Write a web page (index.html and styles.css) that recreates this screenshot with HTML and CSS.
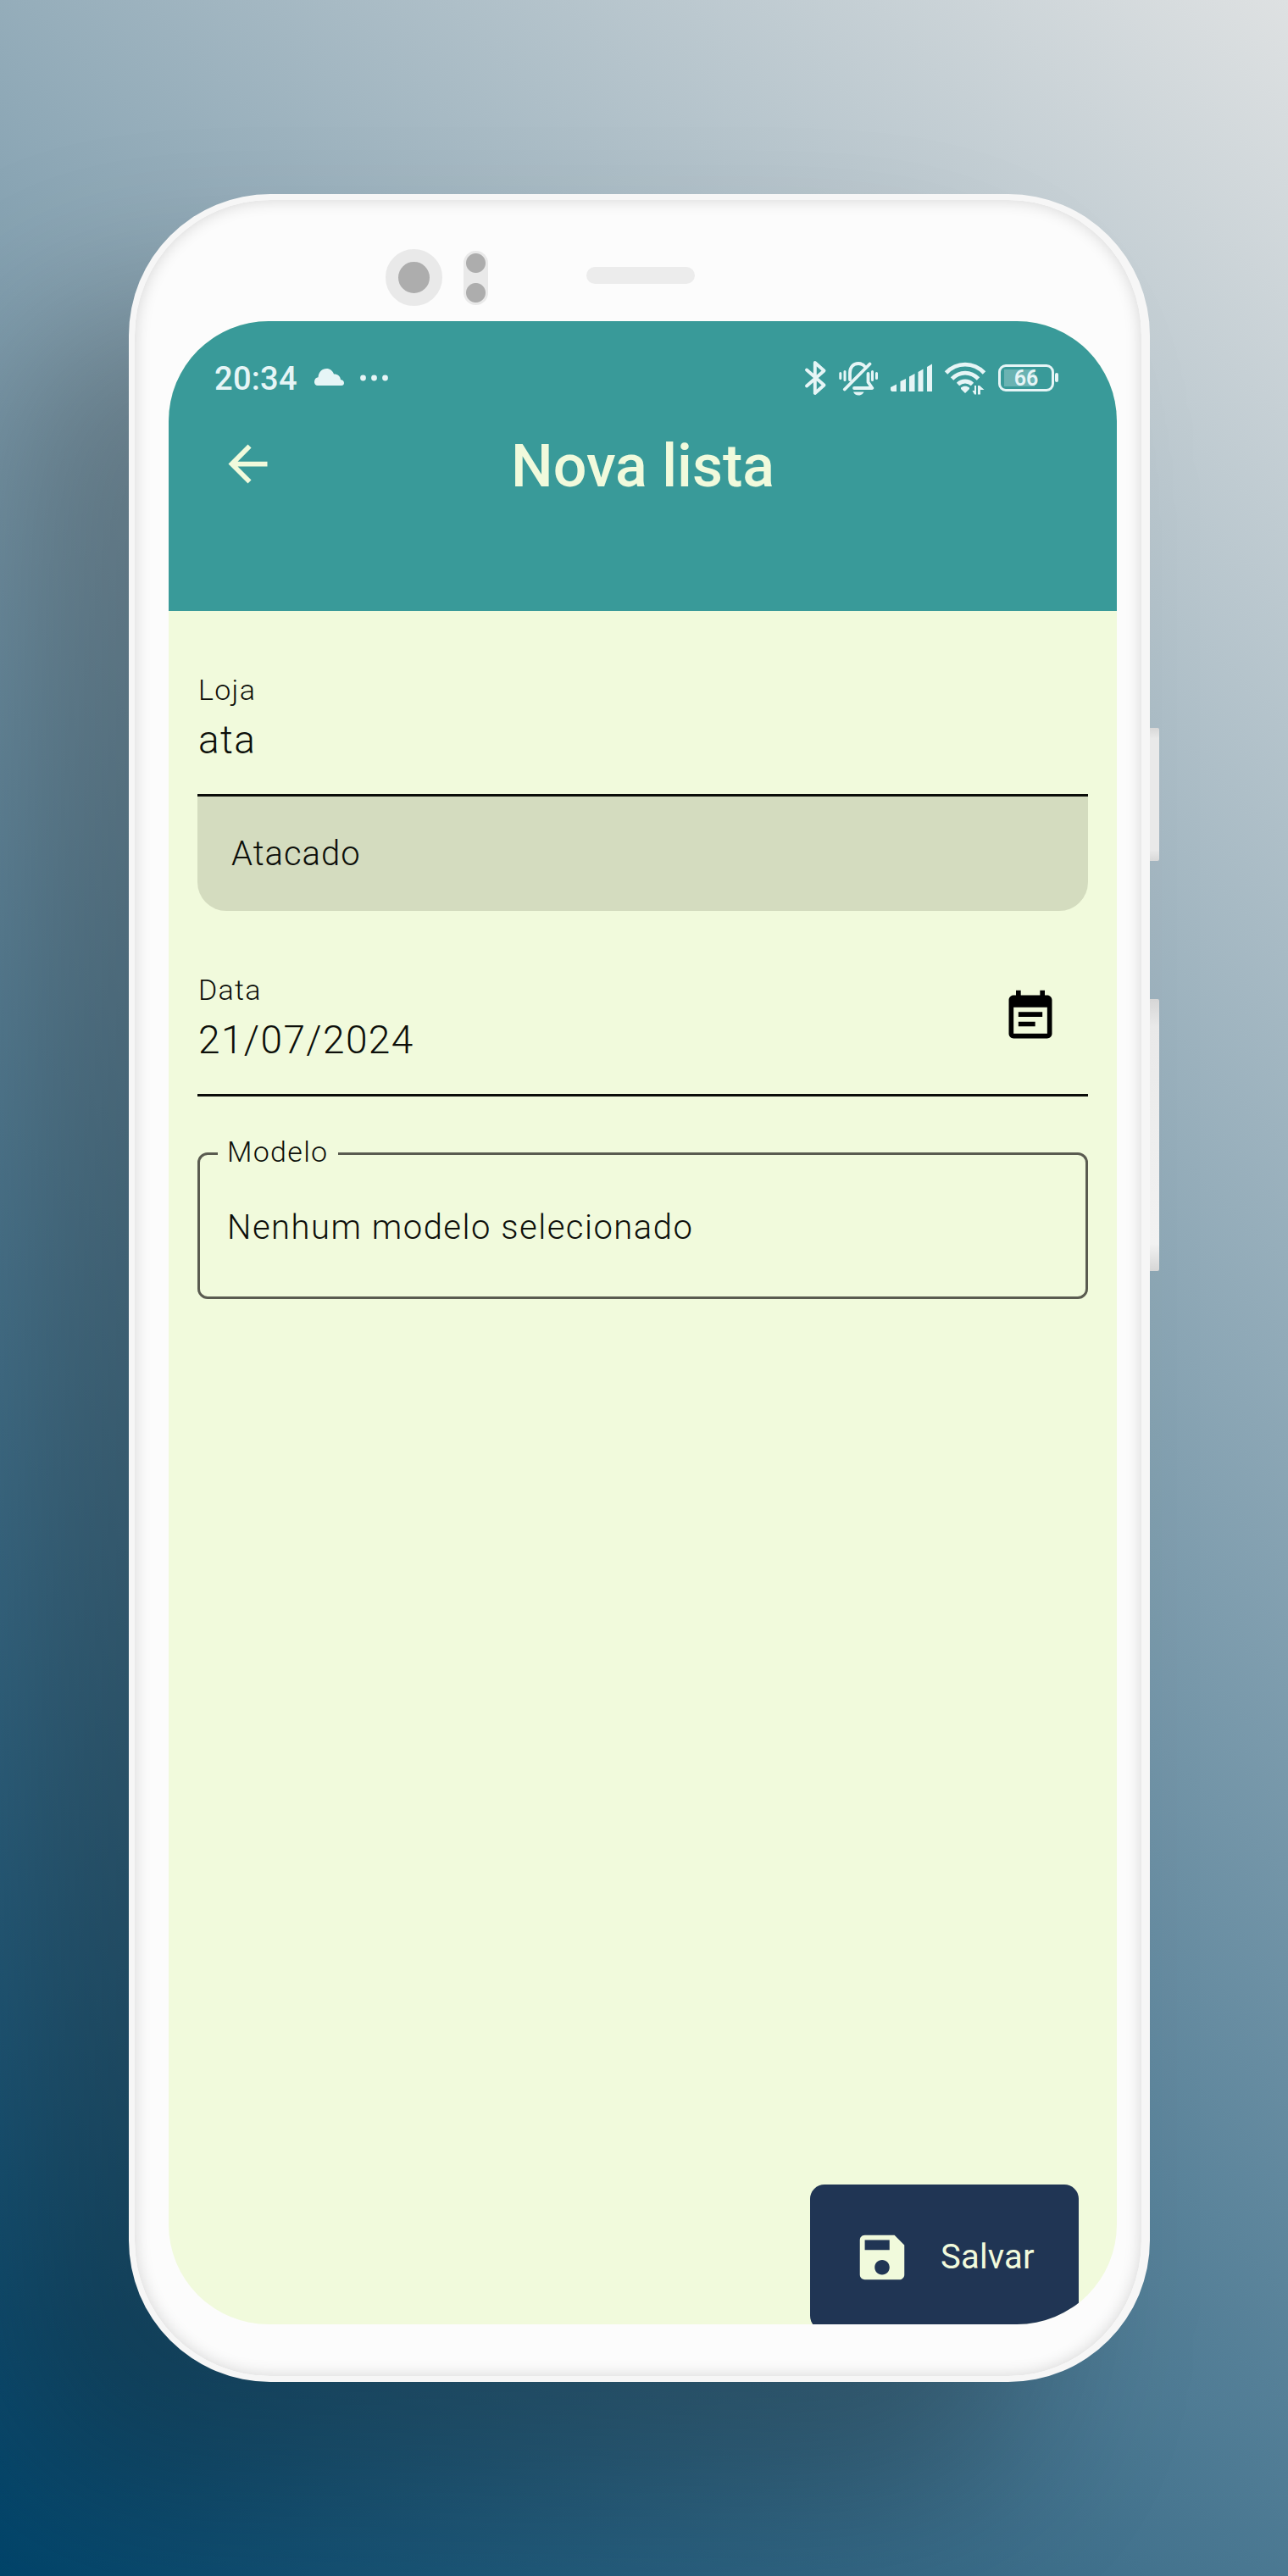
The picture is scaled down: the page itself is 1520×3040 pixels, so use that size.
FILE: index.html
```html
<!DOCTYPE html>
<html lang="pt-BR">
<head>
<meta charset="utf-8">
<title>Nova lista</title>
<link rel="stylesheet" href="styles.css">
</head>
<body>
<main class="stage">
  <div class="phone">
    <span class="side-key side-key-power"></span>
    <span class="side-key side-key-volume"></span>
    <div class="sensors">
      <span class="camera"></span>
      <span class="proximity"></span>
      <span class="speaker"></span>
    </div>
    <div class="screen">
      <header class="app-header">
        <div class="status-bar">
          <span class="clock">20:34</span>
          <svg class="cloud" width="35" height="20" viewBox="0 0 35 20"><path d="M4 20a4 4 0 0 1-4-4.500C0 12.500 2 10.500 4.500 10.300 5 4 9 0 14.500 0c4 0 7 2.400 8.500 6.500C27.500 6.300 30.500 9 31 13c2.500.3 4 1.800 4 4 0 1.800-1.300 3-3 3Z"/></svg>
          <svg class="more" width="33" height="8" viewBox="0 0 33 8"><circle cx="3.500" cy="4" r="3.400"/><circle cx="16.500" cy="4" r="3.400"/><circle cx="29.500" cy="4" r="3.400"/></svg>
          <div class="status-icons">
            <svg width="25" height="42" viewBox="0 0 25 42"><path class="line" stroke-width="3.900" d="M2 10.500 22.500 28.500 11.800 38V2L22.500 11.500 2 29.500"/></svg>
            <svg width="46" height="42" viewBox="0 0 46 42">
              <path class="line" stroke-width="3" d="M1.800 14.500v6M7 12.500v10M39.500 12.500v10M44.500 14.500v6"/>
              <path class="line" stroke-width="3.800" d="M13 22V14c0-6.500 4-11 10-11 3.500 0 6.200 1.500 8 4M36.500 3.500 6.800 33.500M34.500 15v10l4.800 7H18"/>
              <path d="M17 36.500h12.500c-1 2.500-3.500 4-6.300 4s-5.200-1.500-6.200-4Z"/>
            </svg>
            <svg width="49" height="42" viewBox="0 0 49 42"><path d="M0 31 7 27.500V36H1.500L0 34.500ZM11.500 24 18 21v15h-6.500ZM22 18.500 28.500 15v21H22ZM32.500 13 38.500 9.500V36h-6ZM43 7 49 3.500V36h-6Z"/></svg>
            <svg width="48" height="42" viewBox="0 0 48 42">
              <path class="line flat" stroke-width="4.800" d="M1.500 14C14 .8 34 .8 46.500 14M8.500 21c9-9.200 22-9.200 31 0M15.500 27.500c4.800-4.700 12.200-4.700 17 0"/>
              <path d="M19 31.500c3-2.500 7-2.500 10 0v1.500l-5 5-5-5ZM37 29v10.500h-2l-2.500-4.500h2.500V29ZM39 39.500V29h2l5.500 5H42v5.500Z"/>
            </svg>
            <span class="battery"><span class="battery-text">66</span></span>
          </div>
        </div>
        <div class="title-bar">
          <svg class="back" width="69" height="69" viewBox="0 0 24 24"><path d="M20 11H7.830l5.590-5.590L12 4l-8 8 8 8 1.410-1.410L7.830 13H20v-2z"/></svg>
          <h1 class="title">Nova lista</h1>
        </div>
      </header>
      <form class="form">
        <div class="field">
          <span class="label">Loja</span>
          <span class="value">ata</span>
        </div>
        <div class="suggestion">Atacado</div>
        <div class="field field-date">
          <span class="label">Data</span>
          <span class="value">21/07/2024</span>
          <svg class="calendar" width="68" height="68" viewBox="0 0 24 24"><path d="M17 10H7v2h10v-2zm2-7h-1V1h-2v2H8V1H6v2H5c-1.110 0-1.990.9-1.990 2L3 19c0 1.100.89 2 2 2h14c1.100 0 2-.9 2-2V5c0-1.100-.9-2-2-2zm0 16H5V8h14v11zm-5-5H7v2h7v-2z"/></svg>
        </div>
        <fieldset class="model">
          <legend class="model-label"><span class="model-label-text">Modelo</span></legend>
          <div class="model-value">Nenhum modelo selecionado</div>
        </fieldset>
      </form>
      <button class="save" type="button">
        <svg width="70" height="70" viewBox="0 0 24 24"><path d="M17 3H5c-1.110 0-2 .9-2 2v14c0 1.100.89 2 2 2h14c1.100 0 2-.9 2-2V7l-4-4zm-5 16c-1.660 0-3-1.340-3-3s1.340-3 3-3 3 1.340 3 3-1.340 3-3 3zm3-10H5V5h10v4z"/></svg>
        <span>Salvar</span>
      </button>
    </div>
  </div>
</main>
</body>
</html>
```
FILE: styles.css
```css
* { box-sizing: border-box; }

body {
  margin: 0;
  font-family: Roboto, "Liberation Sans", sans-serif;
}

.stage {
  width: 1520px;
  height: 3040px;
  padding: 229px 0 0 152px;
  overflow: hidden;
  background: linear-gradient(45deg, #01446a, #dee1e2);
}

.phone {
  position: relative;
  width: 1205px;
  height: 2582px;
  border: 7px solid #f6f6f6;
  border-right-width: 10px;
  border-radius: 167px;
  background: #fcfcfc;
  box-shadow: inset 0 0 18px 1px rgba(0, 0, 0, .15), -150px 130px 200px rgba(0, 0, 0, .25);
}

.side-key {
  position: absolute;
  left: 1198px;
  width: 11px;
  border-radius: 0 2px 2px 0;
}
.side-key-power {
  top: 623px;
  height: 157px;
  background: linear-gradient(#d8d8d8, #e9e9e9 8%, #e9e9e9 92%, #d8d8d8);
}
.side-key-volume {
  top: 943px;
  height: 321px;
  background: linear-gradient(#d6d6d6, #e9e9e9 10%, #f2f2f2 90%, #d6d6d6);
}

.sensors {
  display: flex;
  align-items: flex-start;
  height: 143px;
  padding: 58px 0 0 296px;
}
.camera {
  width: 67px;
  height: 67px;
  border: 15.5px solid #e9e9e9;
  border-radius: 50%;
  background: #adadad;
}
.proximity {
  width: 29px;
  height: 64px;
  margin: 2px 0 0 25px;
  border-radius: 15px;
  background:
    radial-gradient(circle at 14.5px 14.5px, #adadad 11px, transparent 12px),
    radial-gradient(circle at 14.5px 49.5px, #adadad 11px, transparent 12px),
    #e9e9e9;
}
.speaker {
  width: 128px;
  height: 20px;
  margin: 21px 0 0 116px;
  border-radius: 10px;
  background: #ececec;
}

.screen {
  position: relative;
  width: 1119px;
  height: 2364px;
  margin-left: 40px;
  border-radius: 118px;
  overflow: hidden;
  background: #f1fadc;
}

.app-header {
  height: 342px;
  padding-top: 28px;
  background: #399a99;
}
.status-bar {
  display: flex;
  align-items: center;
  height: 80px;
  padding: 0 68px 0 54px;
  color: #e6f5f6;
  fill: currentColor;
}
.clock {
  width: 118px;
  font-size: 38px;
  font-weight: 500;
  line-height: 80px;
  letter-spacing: .3px;
}
.cloud { margin-top: -5px; }
.more {
  margin-left: 19px;
  margin-top: -2px;
}
.status-icons {
  display: flex;
  align-items: center;
  gap: 15px;
  margin-left: auto;
}
.status-icons svg { overflow: visible; }
.line {
  fill: none;
  stroke: currentColor;
  stroke-linecap: round;
  stroke-linejoin: round;
}
.flat { stroke-linecap: butt; }
.battery {
  position: relative;
  width: 66px;
  height: 32px;
  margin: -2px 6px 0 0;
  border: 3px solid currentColor;
  border-radius: 9px;
  background: linear-gradient(rgba(255, 255, 255, .25), rgba(255, 255, 255, .25)) 4px 3px / 36px 20px no-repeat;
}
.battery::after {
  content: "";
  position: absolute;
  top: 7px;
  right: -8px;
  width: 4px;
  height: 11px;
  border-radius: 2px;
  background: currentColor;
}
.battery-text {
  display: block;
  font-size: 25px;
  font-weight: 600;
  line-height: 28px;
  text-align: center;
}

.title-bar {
  display: grid;
  grid-template-columns: 100px 1fr 100px;
  align-items: center;
  height: 101px;
  margin-top: 12px;
  padding: 0 59px;
}
.back {
  margin-top: -4px;
  fill: #f1fadc;
}
.title {
  margin: 0;
  color: #f1fadc;
  font-size: 70px;
  font-weight: 500;
  line-height: 100px;
  text-align: center;
}

.form {
  padding: 73px 34px 0;
  color: #0d0f0a;
  font-weight: 300;
}
.field {
  position: relative;
  height: 146px;
  border-bottom: 3px solid #0b0c09;
}
.label {
  display: block;
  padding-left: 1px;
  font-size: 34px;
  line-height: 40px;
  letter-spacing: 1.3px;
}
.value {
  display: block;
  margin-top: 9px;
  padding-left: 1px;
  font-size: 46px;
  line-height: 60px;
  letter-spacing: 1.4px;
}
.suggestion {
  height: 135px;
  padding-left: 40px;
  border-radius: 0 0 34px 34px;
  background: #d4dcbf;
  font-size: 40px;
  line-height: 135px;
  letter-spacing: 1px;
}
.field-date { margin-top: 73px; }
.calendar {
  position: absolute;
  right: 34px;
  top: 18px;
  fill: #000;
}
.model {
  height: 192px;
  margin: 47px 0 0;
  padding: 0 31px 0 21px;
  border: 3px solid #5a5b50;
  border-radius: 12px;
}
.model-label {
  padding: 0 12px 0 11px;
  font-size: 34px;
  letter-spacing: 1.3px;
}
.model-label-text {
  display: block;
  height: 40px;
  line-height: 37px;
}
.model-value {
  padding-left: 11px;
  font-size: 40px;
  line-height: 135px;
  letter-spacing: 1.5px;
}

.save {
  position: absolute;
  left: 757px;
  top: 2199px;
  display: flex;
  align-items: center;
  gap: 34px;
  width: 317px;
  height: 172px;
  padding: 0 0 0 50px;
  border: 0;
  border-radius: 17px;
  background: #203554;
  color: #f1fadc;
  fill: currentColor;
  font: 450 40px/60px Roboto, "Liberation Sans", sans-serif;
  letter-spacing: .2px;
}
```
